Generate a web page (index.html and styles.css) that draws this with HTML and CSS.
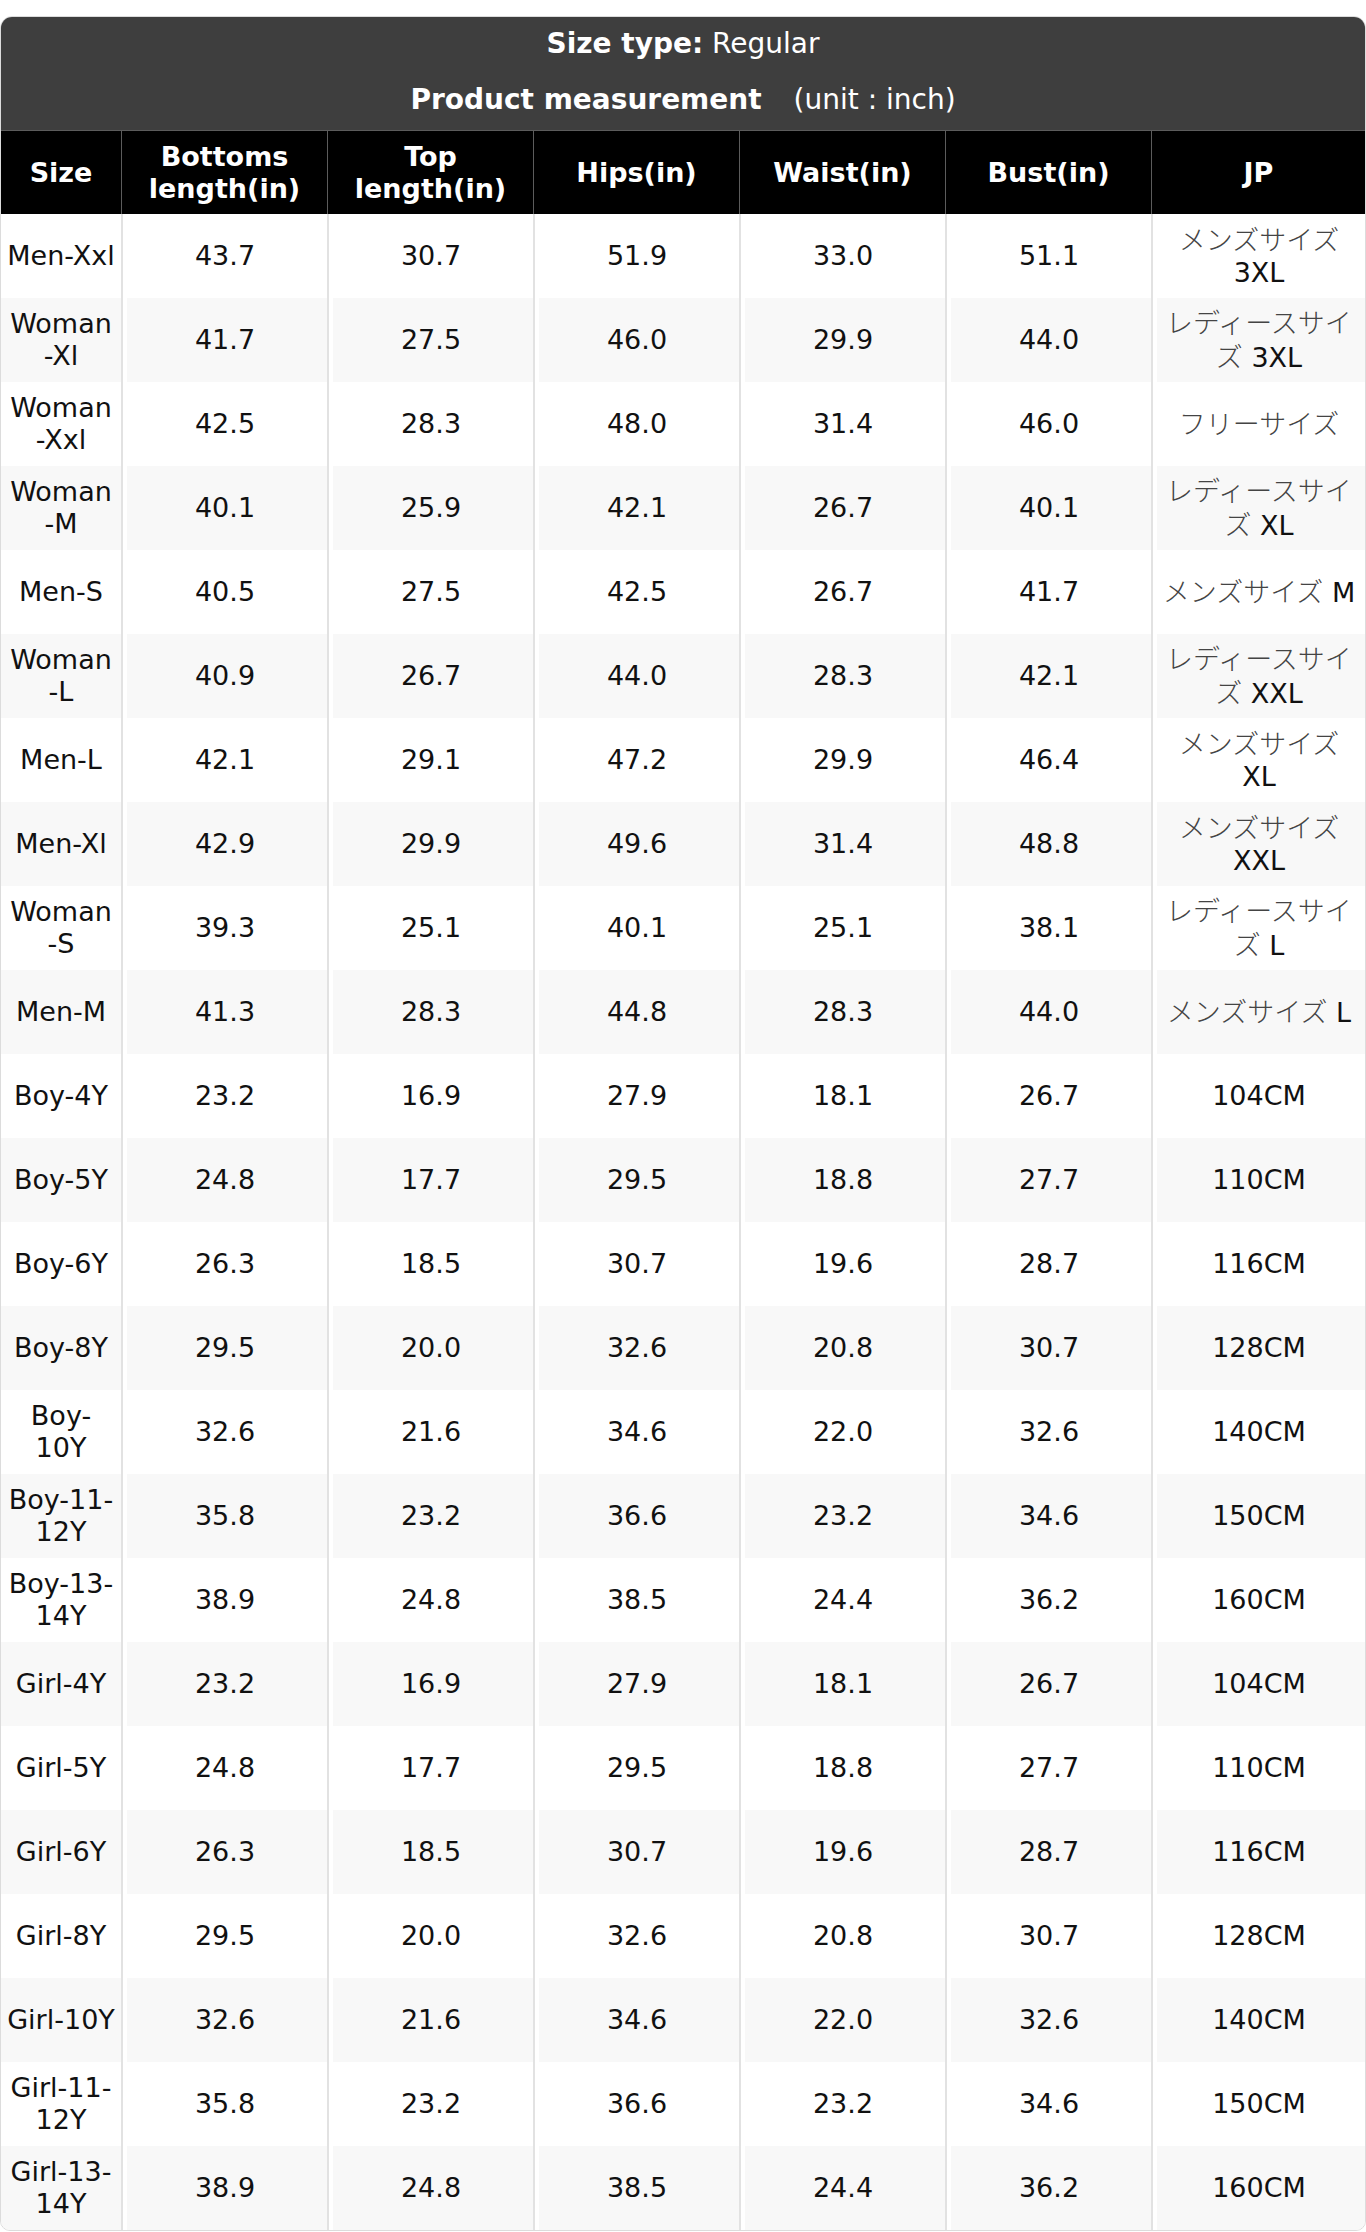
FILE: index.html
```html
<!DOCTYPE html>
<html lang="en">
<head>
<meta charset="utf-8">
<title>Size chart</title>
<link rel="stylesheet" href="styles.css">
</head>
<body>
<div class="chart">
  <div class="chart-head">
    <div class="head-line"><b>Size type:</b> Regular</div>
    <div class="head-line"><b>Product measurement</b><span class="unit">(unit : inch)</span></div>
  </div>
  <table class="size-table">
    <colgroup>
      <col class="c-size"><col class="c-num"><col class="c-num"><col class="c-num"><col class="c-num"><col class="c-num"><col class="c-jp">
    </colgroup>
    <thead>
      <tr><th>Size</th><th>Bottoms length(in)</th><th>Top length(in)</th><th>Hips(in)</th><th>Waist(in)</th><th>Bust(in)</th><th>JP</th></tr>
    </thead>
    <tbody>
      <tr><td>Men-Xxl</td><td>43.7</td><td>30.7</td><td>51.9</td><td>33.0</td><td>51.1</td><td><span class="ja">メンズサイズ</span> 3XL</td></tr>
      <tr><td>Woman -Xl</td><td>41.7</td><td>27.5</td><td>46.0</td><td>29.9</td><td>44.0</td><td><span class="ja">レディースサイズ</span> 3XL</td></tr>
      <tr><td>Woman -Xxl</td><td>42.5</td><td>28.3</td><td>48.0</td><td>31.4</td><td>46.0</td><td><span class="ja">フリーサイズ</span></td></tr>
      <tr><td>Woman -M</td><td>40.1</td><td>25.9</td><td>42.1</td><td>26.7</td><td>40.1</td><td><span class="ja">レディースサイズ</span> XL</td></tr>
      <tr><td>Men-S</td><td>40.5</td><td>27.5</td><td>42.5</td><td>26.7</td><td>41.7</td><td><span class="ja">メンズサイズ</span> M</td></tr>
      <tr><td>Woman -L</td><td>40.9</td><td>26.7</td><td>44.0</td><td>28.3</td><td>42.1</td><td><span class="ja">レディースサイズ</span> XXL</td></tr>
      <tr><td>Men-L</td><td>42.1</td><td>29.1</td><td>47.2</td><td>29.9</td><td>46.4</td><td><span class="ja">メンズサイズ</span> XL</td></tr>
      <tr><td>Men-Xl</td><td>42.9</td><td>29.9</td><td>49.6</td><td>31.4</td><td>48.8</td><td><span class="ja">メンズサイズ</span> XXL</td></tr>
      <tr><td>Woman -S</td><td>39.3</td><td>25.1</td><td>40.1</td><td>25.1</td><td>38.1</td><td><span class="ja">レディースサイズ</span> L</td></tr>
      <tr><td>Men-M</td><td>41.3</td><td>28.3</td><td>44.8</td><td>28.3</td><td>44.0</td><td><span class="ja">メンズサイズ</span> L</td></tr>
      <tr><td>Boy-4Y</td><td>23.2</td><td>16.9</td><td>27.9</td><td>18.1</td><td>26.7</td><td>104CM</td></tr>
      <tr><td>Boy-5Y</td><td>24.8</td><td>17.7</td><td>29.5</td><td>18.8</td><td>27.7</td><td>110CM</td></tr>
      <tr><td>Boy-6Y</td><td>26.3</td><td>18.5</td><td>30.7</td><td>19.6</td><td>28.7</td><td>116CM</td></tr>
      <tr><td>Boy-8Y</td><td>29.5</td><td>20.0</td><td>32.6</td><td>20.8</td><td>30.7</td><td>128CM</td></tr>
      <tr><td>Boy-10Y</td><td>32.6</td><td>21.6</td><td>34.6</td><td>22.0</td><td>32.6</td><td>140CM</td></tr>
      <tr><td>Boy-11-12Y</td><td>35.8</td><td>23.2</td><td>36.6</td><td>23.2</td><td>34.6</td><td>150CM</td></tr>
      <tr><td>Boy-13-14Y</td><td>38.9</td><td>24.8</td><td>38.5</td><td>24.4</td><td>36.2</td><td>160CM</td></tr>
      <tr><td>Girl-4Y</td><td>23.2</td><td>16.9</td><td>27.9</td><td>18.1</td><td>26.7</td><td>104CM</td></tr>
      <tr><td>Girl-5Y</td><td>24.8</td><td>17.7</td><td>29.5</td><td>18.8</td><td>27.7</td><td>110CM</td></tr>
      <tr><td>Girl-6Y</td><td>26.3</td><td>18.5</td><td>30.7</td><td>19.6</td><td>28.7</td><td>116CM</td></tr>
      <tr><td>Girl-8Y</td><td>29.5</td><td>20.0</td><td>32.6</td><td>20.8</td><td>30.7</td><td>128CM</td></tr>
      <tr><td>Girl-10Y</td><td>32.6</td><td>21.6</td><td>34.6</td><td>22.0</td><td>32.6</td><td>140CM</td></tr>
      <tr><td>Girl-11-12Y</td><td>35.8</td><td>23.2</td><td>36.6</td><td>23.2</td><td>34.6</td><td>150CM</td></tr>
      <tr><td>Girl-13-14Y</td><td>38.9</td><td>24.8</td><td>38.5</td><td>24.4</td><td>36.2</td><td>160CM</td></tr>
    </tbody>
  </table>
</div>
</body>
</html>
```
FILE: styles.css
```css
html, body {
  margin: 0;
  padding: 0;
  background: #fff;
}

body {
  font-family: "DejaVu Sans", "Noto Sans CJK JP", sans-serif;
  color: #111;
}

.chart {
  margin-top: 16px;
  border: 1px solid #dcdcdc;
  border-radius: 12px 12px 10px 10px;
  overflow: hidden;
}

.chart-head {
  background: #3e3e3e;
  color: #fff;
  font-size: 28px;
  line-height: 32px;
  padding: 11px 0 14px;
  display: flex;
  flex-direction: column;
  align-items: center;
  gap: 24px;
}

.chart-head b {
  font-weight: bold;
}

.unit {
  margin-left: 32px;
}

.size-table {
  width: 100%;
  border-collapse: separate;
  border-spacing: 0;
  table-layout: fixed;
  font-size: 27px;
  line-height: 32px;
}

.c-size { width: 120px; }
.c-num { width: 206px; }

.size-table thead tr {
  height: 84px;
}

.size-table th {
  background: #000;
  color: #fff;
  font-weight: bold;
  text-align: center;
  padding: 0 5px;
  border-top: 1px solid #5c5c5c;
  border-left: 1px solid #5c5c5c;
}

.size-table th:first-child {
  border-left: none;
}

.size-table tbody tr {
  height: 84px;
}

.size-table td {
  text-align: center;
  padding: 0 5px;
  color: #111;
  border-left: 2px solid #e2e2e2;
  box-shadow: inset 4px 0 0 #fff;
}

.size-table td:first-child {
  border-left: none;
  box-shadow: none;
}

.size-table tbody tr:nth-child(even) td {
  background: #f8f8f8;
}

.ja {
  font-family: "Noto Sans CJK JP", sans-serif;
  font-weight: 300;
  color: #444;
}
```
